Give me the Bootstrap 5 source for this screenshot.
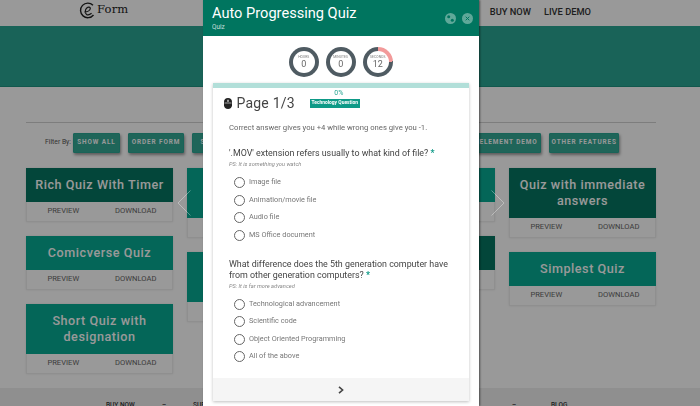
<!DOCTYPE html>
<html lang="en">
<head>
<meta charset="utf-8">
<title>eForm – Auto Progressing Quiz</title>
<link href="https://cdn.jsdelivr.net/npm/bootstrap@5.3.0/dist/css/bootstrap.min.css" rel="stylesheet">
<style>
html,body{height:406px;overflow:hidden}
body{font-family:Roboto,"Liberation Sans",sans-serif;background:#fff;position:relative}
.ef-top{height:26px;padding:0 109px 0 79px}
.ef-logo{gap:1px;font-family:"DejaVu Serif",serif;font-size:11.5px;color:#222;letter-spacing:.2px;margin-top:-6px}
.ef-menu{gap:13px;font-size:9.3px;font-weight:500;color:#333;margin-top:-3px}
.ef-drop{border-bottom:1px solid #2aa693;padding:0 0 1px 0;margin-right:0}
.ef-hero{height:61px;background:#2aa693;border-bottom:1px solid #1f9381}
.ef-main{width:630px;margin-left:26px}
.ef-rule{margin:34.5px 0 0;border-top:1px solid #d0d0d0;opacity:1}
.ef-filter{height:46px;margin-top:-3px;padding-left:19px;gap:8px;font-size:6.8px;color:#555}
.ef-filter>span{margin-right:-6px}
.ef-chip{height:20px;padding:0;border:1px solid #2aa693;background:#34a895;color:#fff;font-size:6.4px;font-weight:700;letter-spacing:.9px;border-radius:1px;box-shadow:1px 2px 3px rgba(0,0,0,.4);display:flex;align-items:center;justify-content:center}
.ef-chip-a{width:47px}.ef-chip-b{width:56px}.ef-chip-c{width:70px}.ef-chip-d{width:65px}.ef-chip-e{width:70.5px}
.ef-cols{gap:14px;margin-top:2px}
.ef-col{width:147px;gap:14px}
.ef-tile{border-radius:0;border:1px solid #eee;background:#fff;box-shadow:0 0 2px rgba(0,0,0,.1)}
.ef-tile .card-header{border:0;border-radius:0;padding:9px 6px;margin:-1px -1px 0;font-size:12.6px;line-height:16px;font-weight:500;letter-spacing:.55px;text-align:center;color:#fff;height:34px}
.ef-tile .card-header.ef-two{height:50px}
.ef-deep{background:#057661}
.ef-mid{background:#08aa93}
.ef-tile .card-footer{height:19px;padding:0;border:0;background:#fff;font-size:7.6px;color:#666;display:flex;align-items:center}
.ef-tile .card-footer span{flex:1;text-align:center}
.ef-bottom{position:absolute;left:0;right:0;top:388px;height:18px;background:#eee;font-size:6.5px;font-weight:500;color:#333;padding:13px 0 0 0}
.ef-bottom span{position:absolute}
.ef-b1{left:106px}.ef-b2{left:162px}.ef-b3{left:193px}.ef-b4{left:512px}.ef-b5{left:551px}
.modal-backdrop.show{opacity:.4}
.ef-arrow{position:absolute;top:190px;z-index:1056}
.ef-arrow-l{left:177px}.ef-arrow-r{left:491px}
.modal.ef-modal{overflow:hidden;background:transparent}
.ef-modal .modal-dialog{width:276px;max-width:none;margin:0 0 0 203px;height:406px}
.ef-modal .modal-content{border:0;border-radius:0;height:406px;box-shadow:1px 0 2px rgba(0,0,0,.5);background:#fff}
.ef-modal .modal-header{height:36px;padding:0 6px 0 9px;border:0;border-radius:0;background:#00755f;color:#fff}
.ef-title{font-size:14.6px;line-height:17px;margin:0;font-weight:400;margin-top:-1px}
.ef-sub{font-size:6.4px;line-height:8px;opacity:.75;margin-top:1px}
.ef-tools{gap:6px}
.ef-round{width:11px;height:11px;border-radius:50%;background:#5fa899;display:block}
.ef-modal .modal-body{padding:0 10px 0 9.5px;display:flex;flex-direction:column}
.ef-dials{height:47px;gap:7px;padding-top:11px}
.ef-dial{width:30px;height:30px;border-radius:50%;background:#4f5b62;padding:4px}
.ef-dial-red{background:conic-gradient(#f29a9a 0 88deg,#4f5b62 88deg 360deg)}
.ef-face{width:22px;height:22px;border-radius:50%;background:#fff;color:#666;font-size:9px;line-height:9px}
.ef-face small{font-size:3.3px;line-height:5px;color:#777;letter-spacing:.1px}
.ef-paper{height:318px;box-shadow:0 1px 3px rgba(0,0,0,.25);border-radius:0;border:0}
.ef-bar{height:5px;background:#b2dfd9;border-radius:0}
.ef-pct{font-size:7px;line-height:8px;color:#2aa693;text-align:center;width:100%;padding-right:4px;margin-top:1px}
.ef-pagehead{padding:0 0 0 11px;height:14px;gap:5px;margin-top:-1px}
.ef-pagehead h2{font-size:14px;font-weight:400;line-height:14px;margin:0;color:#444;letter-spacing:.2px}
.ef-tag{margin-left:10px;height:9px;width:50px;background:#0e9a87;color:#fff;font-size:4.9px;font-weight:700;display:flex;align-items:center;justify-content:center}
.ef-paper .card-body{padding:0 12px 0 16.5px;flex:1}
.ef-note{font-size:7.7px;line-height:10px;color:#666;margin:13px 0 0}
.ef-q{font-size:8.9px;line-height:11px;color:#444;margin:0}
.ef-q b{color:#0e9a87;font-weight:700}
.ef-q1{margin-top:15px}
.ef-q2{margin-top:14.5px;padding-right:6px}
.ef-hint{font-size:5.7px;line-height:8px;font-style:italic;color:#888;margin:1px 0 0}
.ef-opts{margin:6px 0 0 5px;list-style:none;padding:0}
.ef-opts li{height:17.5px;gap:4px;font-size:7.3px;color:#777}
.ef-opts i{display:block;width:11px;height:11px;border:1px solid #666;border-radius:50%}
.ef-paper .card-footer{height:23px;background:#f5f5f5;border:0;border-radius:0;padding:0}
</style>
</head>
<body>
<header class="ef-top navbar d-flex justify-content-between align-items-center p-0 ps-0" style="padding-left:79px!important;padding-right:109px!important">
  <div class="ef-logo d-flex align-items-center">
    <svg width="17" height="17" viewBox="0 0 17 17" fill="none" stroke="#222"><path d="M14 3.2A7.3 7.3 0 1 0 14.5 13" stroke-width="1.4"/><path d="M5.5 10.2C8 10 11 8.5 11.3 6.6 11.5 5 9.3 4.5 8 5.8 6 7.6 5.6 11 7.5 12.4 9 13.3 11 12.6 12.6 11.3" stroke-width="1.2"/></svg>
    <span>Form</span>
  </div>
  <nav class="ef-menu d-flex align-items-center">
    <span class="ef-drop">PAGES ⌄</span>
    <span>BUY NOW</span>
    <span>LIVE DEMO</span>
  </nav>
</header>
<section class="ef-hero"></section>
<main class="ef-main">
  <hr class="ef-rule">
  <div class="ef-filter d-flex align-items-center">
    <span>Filter By:</span>
    <button class="ef-chip ef-chip-a">SHOW ALL</button>
    <button class="ef-chip ef-chip-b">ORDER FORM</button>
    <button class="ef-chip ef-chip-c">SURVEY FORM</button>
    <button class="ef-chip ef-chip-b">QUIZ FORM</button>
    <button class="ef-chip ef-chip-c">CONTACT FORM</button>
    <button class="ef-chip ef-chip-b">BOOKING</button>
    <button class="ef-chip ef-chip-d">ELEMENT DEMO</button>
    <button class="ef-chip ef-chip-e">OTHER FEATURES</button>
  </div>
  <div class="ef-cols d-flex align-items-start">
    <div class="ef-col d-flex flex-column">
      <div class="card ef-tile"><div class="card-header ef-deep">Rich Quiz With Timer</div><div class="card-footer"><span>PREVIEW</span><span>DOWNLOAD</span></div></div>
      <div class="card ef-tile"><div class="card-header ef-mid">Comicverse Quiz</div><div class="card-footer"><span>PREVIEW</span><span>DOWNLOAD</span></div></div>
      <div class="card ef-tile"><div class="card-header ef-two ef-mid">Short Quiz with designation</div><div class="card-footer"><span>PREVIEW</span><span>DOWNLOAD</span></div></div>
    </div>
    <div class="ef-col d-flex flex-column">
      <div class="card ef-tile"><div class="card-header ef-two ef-mid">Survey Quiz with score</div><div class="card-footer"><span>PREVIEW</span><span>DOWNLOAD</span></div></div>
      <div class="card ef-tile"><div class="card-header ef-two ef-mid">Math Quiz with formula</div><div class="card-footer"><span>PREVIEW</span><span>DOWNLOAD</span></div></div>
    </div>
    <div class="ef-col d-flex flex-column">
      <div class="card ef-tile"><div class="card-header ef-mid">Basic Quiz</div><div class="card-footer"><span>PREVIEW</span><span>DOWNLOAD</span></div></div>
      <div class="card ef-tile"><div class="card-header ef-deep">Image Quiz</div><div class="card-footer"><span>PREVIEW</span><span>DOWNLOAD</span></div></div>
    </div>
    <div class="ef-col d-flex flex-column">
      <div class="card ef-tile"><div class="card-header ef-two ef-deep">Quiz with immediate answers</div><div class="card-footer"><span>PREVIEW</span><span>DOWNLOAD</span></div></div>
      <div class="card ef-tile"><div class="card-header ef-mid">Simplest Quiz</div><div class="card-footer"><span>PREVIEW</span><span>DOWNLOAD</span></div></div>
    </div>
  </div>
</main>
<footer class="ef-bottom">
  <span class="ef-b1">BUY NOW</span><span class="ef-b2">–</span><span class="ef-b3">SUPPORT</span><span class="ef-b4">–</span><span class="ef-b5">BLOG</span>
</footer>

<div class="modal-backdrop show"></div>

<svg class="ef-arrow ef-arrow-l" width="14" height="26" viewBox="0 0 14 26" fill="none" stroke="#fff" stroke-opacity=".35"><path d="M13.5 0.5 1 13l12.5 12.5"/></svg>
<svg class="ef-arrow ef-arrow-r" width="14" height="26" viewBox="0 0 14 26" fill="none" stroke="#fff" stroke-opacity=".35"><path d="M0.5 0.5 13 13 0.5 25.5"/></svg>

<div class="modal d-block ef-modal" role="dialog">
  <div class="modal-dialog">
    <div class="modal-content">
      <div class="modal-header">
        <div>
          <h1 class="ef-title">Auto Progressing Quiz</h1>
          <div class="ef-sub">Quiz</div>
        </div>
        <div class="ef-tools d-flex align-items-center">
          <svg class="ef-round" viewBox="0 0 11 11"><circle cx="3.7" cy="3.7" r="1.5" fill="#00755f"/><circle cx="7.3" cy="7.3" r="1.5" fill="#00755f"/></svg>
          <svg class="ef-round" viewBox="0 0 11 11"><path d="M3.7 3.7l3.6 3.6M7.3 3.7L3.7 7.3" stroke="#00755f" fill="none"/></svg>
        </div>
      </div>
      <div class="modal-body">
        <div class="ef-dials d-flex justify-content-center">
          <div class="ef-dial"><div class="ef-face d-flex flex-column align-items-center justify-content-center"><small>HOURS</small>0</div></div>
          <div class="ef-dial"><div class="ef-face d-flex flex-column align-items-center justify-content-center"><small>MINUTES</small>0</div></div>
          <div class="ef-dial ef-dial-red"><div class="ef-face d-flex flex-column align-items-center justify-content-center"><small>SECONDS</small>12</div></div>
        </div>
        <div class="card ef-paper">
          <div class="ef-bar"></div>
          <div class="ef-pct">0%</div>
          <div class="ef-pagehead d-flex align-items-center">
            <svg width="8" height="11" viewBox="0 0 8 11"><path d="M4 0C1.5 0 0 1.6 0 4v3.2C0 9.5 1.7 11 4 11s4-1.5 4-3.8V4C8 1.6 6.5 0 4 0z" fill="#222"/><path d="M0.5 5h7" stroke="#ddd" stroke-width=".7"/><rect x="3.4" y="1.6" width="1.2" height="2.4" rx=".6" fill="#ddd"/></svg>
            <h2>Page 1/3</h2>
            <span class="ef-tag">Technology Question</span>
          </div>
          <div class="card-body">
            <p class="ef-note">Correct answer gives you +4 while wrong ones give you -1.</p>
            <p class="ef-q ef-q1">'.MOV' extension refers usually to what kind of file? <b>*</b></p>
            <p class="ef-hint">PS: It is something you watch</p>
            <ul class="ef-opts">
              <li class="d-flex align-items-center"><i></i>Image file</li>
              <li class="d-flex align-items-center"><i></i>Animation/movie file</li>
              <li class="d-flex align-items-center"><i></i>Audio file</li>
              <li class="d-flex align-items-center"><i></i>MS Office document</li>
            </ul>
            <p class="ef-q ef-q2">What difference does the 5th generation computer have from other generation computers? <b>*</b></p>
            <p class="ef-hint">PS: It is far more advanced</p>
            <ul class="ef-opts">
              <li class="d-flex align-items-center"><i></i>Technological advancement</li>
              <li class="d-flex align-items-center"><i></i>Scientific code</li>
              <li class="d-flex align-items-center"><i></i>Object Oriented Programming</li>
              <li class="d-flex align-items-center"><i></i>All of the above</li>
            </ul>
          </div>
          <div class="card-footer d-flex align-items-center justify-content-center">
            <svg width="6" height="8" viewBox="0 0 6 8" fill="none" stroke="#444" stroke-width="1.6"><path d="M1 .8 4.6 4 1 7.2"/></svg>
          </div>
        </div>
      </div>
    </div>
  </div>
</div>
<script src="https://cdn.jsdelivr.net/npm/bootstrap@5.3.0/dist/js/bootstrap.bundle.min.js"></script>
</body>
</html>
